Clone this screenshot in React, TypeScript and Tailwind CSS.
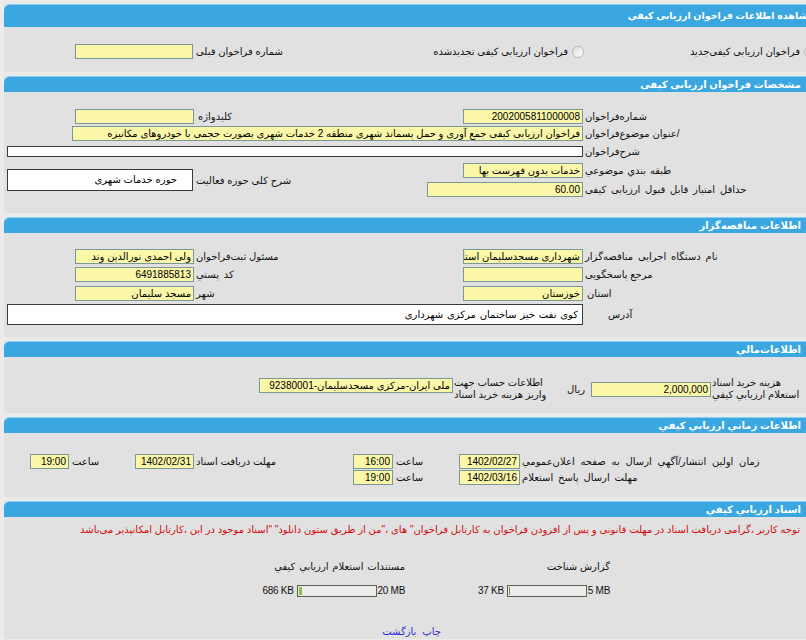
import clsx from "clsx";
import type { ReactNode } from "react";

function Field({ className, value, white }: { className: string; value?: string; white?: boolean }) {
  return (
    <div
      dir="rtl"
      className={clsx(
        "shrink-0 overflow-hidden whitespace-nowrap border px-[2px] text-right text-[10px] text-black",
        white ? "border-[#3a3a3a] bg-white" : "h-[15px] border-[#7b9898] bg-[#faf7a9] leading-[13px]",
        className,
      )}
    >
      {value}
    </div>
  );
}

function Label({ children, className }: { children: ReactNode; className?: string }) {
  return (
    <span dir="rtl" className={clsx("ml-[2px] whitespace-nowrap text-[10px] leading-[13px] text-[#111]", className)}>
      {children}
    </span>
  );
}

function TwoLines({ a, b, className }: { a: string; b: string; className?: string }) {
  return (
    <div dir="rtl" className={clsx("ml-[1px] flex flex-col items-end text-[10px] leading-[12px] text-[#111]", className)}>
      <span className="whitespace-nowrap">{a}</span>
      <span className="whitespace-nowrap">{b}</span>
    </div>
  );
}

function Radio({ className }: { className?: string }) {
  return <span className={clsx("h-[12px] w-[12px] shrink-0 rounded-full border border-[#b8b8b8] bg-gradient-to-br from-[#dcdcdc] to-white", className)} />;
}

function Bar({ title, big }: { title: string; big?: boolean }) {
  return (
    <div
      className={clsx(
        "flex items-center rounded-tl-[6px] border-t border-[#8ccff2] bg-[#3aa7e1]",
        big ? "h-[23px]" : "h-[16px]",
      )}
    >
      <div
        dir="rtl"
        className={clsx(
          "whitespace-nowrap font-bold text-white",
          big ? "w-[810px] text-[9.5px]" : "w-[797px] text-[10px]",
        )}
      >
        {title}
      </div>
    </div>
  );
}

function Panel({ title, big, children }: { title: string; big?: boolean; children: ReactNode }) {
  return (
    <section className="ml-[4px] w-[830px] bg-[#e1e1e1]">
      <Bar title={title} big={big} />
      {children}
    </section>
  );
}

function Meter({ used, max, fill }: { used: string; max: string; fill: string }) {
  return (
    <div className="mt-[12px] flex h-[12px] items-center text-[10px] leading-[12px] tracking-[-0.3px] text-[#111]">
      <span>{used}</span>
      <div className="ml-[3px] flex h-[12px] w-[80px] border border-[#5f5f50] bg-[#ececec] p-[1px]">
        <div className={clsx("h-full", fill)} />
      </div>
      <span className="ml-[1px]">{max}</span>
    </div>
  );
}

export default function App() {
  return (
    <div className="h-[640px] w-[806px] overflow-hidden bg-[#ebebeb] font-['Liberation_Sans','DejaVu_Sans',sans-serif]">
      <div className="flex w-[840px] flex-col gap-[4px] pt-[4px]">
        <Panel title="مشاهده اطلاعات فراخوان ارزیابی کیفی" big>
          <div className="box-content flex h-[15px] items-center pb-[13px] pt-[17px]">
            <div className="flex w-[296px] items-center pl-[71px]">
              <Field className="w-[118px]" />
              <Label className="ml-[3px]">شماره فراخوان قبلی</Label>
            </div>
            <div className="flex w-[284px] items-center justify-end">
              <Label>فراخوان ارزیابی کیفی تجدیدشده</Label>
              <Radio className="ml-[4px]" />
            </div>
            <div className="flex w-[216px] items-center justify-end">
              <Label>فراخوان ارزیابی کیفی‌جدید</Label>
            </div>
            <Radio className="ml-[4px]" />
          </div>
        </Panel>

        <Panel title="مشخصات فراخوان ارزیابی کیفی">
          <div className="pb-[16px] pt-[17px]">
            <div className="flex h-[15px] items-center">
              <div className="flex w-[416px] items-center pl-[71px]">
                <Field className="w-[119px]" />
                <Label className="ml-[4px]">کلیدواژه</Label>
              </div>
              <div className="flex items-center pl-[43px]">
                <Field className="w-[120px]" value="2002005811000008" />
                <Label>شماره‌فراخوان</Label>
              </div>
            </div>
            <div className="mt-[2px] flex h-[15px] items-center pl-[68px]">
              <Field
                className="w-[511px]"
                value="فراخوان ارزیابی کیفی جمع آوری و حمل پسماند شهری منطقه 2 خدمات شهری بصورت حجمی با خودروهای مکانیزه"
              />
              <Label>/عنوان موضوع‌فراخوان</Label>
            </div>
            <div className="mt-[4px] flex items-center pl-[3px]">
              <Field white className="h-[11px] w-[576px]" />
              <Label>شرح‌فراخوان</Label>
            </div>
            <div className="mt-[5px] flex items-center">
              <div className="flex w-[416px] items-center pl-[3px]">
                <Field white className="h-[22px] w-[186px] pr-[15px] leading-[20px]" value="حوزه خدمات شهری" />
                <Label className="ml-[3px]">شرح کلی حوزه فعالیت</Label>
              </div>
              <div className="flex flex-col gap-[4px]">
                <div className="flex items-center pl-[43px]">
                  <Field className="w-[120px]" value="خدمات بدون فهرست بها" />
                  <Label className="[word-spacing:1px]">طبقه بندي موضوعي</Label>
                </div>
                <div className="flex items-center pl-[7px]">
                  <Field className="w-[156px]" value="60.00" />
                  <Label className="[word-spacing:2px]">حداقل امتیاز قابل قبول ارزیابی کیفی</Label>
                </div>
              </div>
            </div>
          </div>
        </Panel>

        <Panel title="اطلاعات مناقصه‌گزار">
          <div className="pb-[12px] pt-[16px]">
            <div className="flex items-center">
              <div className="flex w-[416px] items-center pl-[71px]">
                <Field className="w-[119px]" value="ولی احمدی نورالدین وند" />
                <Label>مسئول ثبت‌فراخوان</Label>
              </div>
              <div className="flex items-center pl-[43px]">
                <Field className="w-[120px]" value="شهرداری مسجدسلیمان استان" />
                <Label className="[word-spacing:2px]">نام دستگاه اجرایی مناقصه‌گزار</Label>
              </div>
            </div>
            <div className="mt-[3px] flex items-center">
              <div className="flex w-[416px] items-center pl-[71px]">
                <Field className="w-[119px]" value="6491885813" />
                <Label className="[word-spacing:2px]">کد پستي</Label>
              </div>
              <div className="flex items-center pl-[43px]">
                <Field className="w-[120px]" />
                <Label>مرجع پاسخگویی</Label>
              </div>
            </div>
            <div className="mt-[4px] flex items-center">
              <div className="flex w-[416px] items-center pl-[71px]">
                <Field className="w-[119px]" value="مسجد سلیمان" />
                <Label>شهر</Label>
              </div>
              <div className="flex items-center pl-[43px]">
                <Field className="w-[120px]" value="خوزستان" />
                <Label className="ml-[4px]">استان</Label>
              </div>
            </div>
            <div className="mt-[3px] flex items-center pl-[3px]">
              <Field
                white
                className="h-[21px] w-[576px] pr-[4px] leading-[19px] [word-spacing:1px]"
                value="کوی نفت خیز ساختمان مرکزی شهرداری"
              />
              <Label className="ml-[25px]">آدرس</Label>
            </div>
          </div>
        </Panel>

        <Panel title="اطلاعات‌مالي">
          <div className="box-content flex h-[24px] items-center pb-[12px] pt-[20px]">
            <div className="flex w-[556px] items-center pl-[255px]">
              <Field className="-mt-[7px] w-[194px]" value="ملی ایران-مرکزی مسجدسلیمان-92380001" />
              <TwoLines a="اطلاعات حساب جهت" b="واریز هزینه خرید اسناد" />
            </div>
            <div dir="rtl" className="w-[30px] pr-[5px] text-[10px] text-[#111]">
              ریال
            </div>
            <Field className="ml-[1px] w-[120px]" value="2,000,000" />
            <TwoLines a="هزینه خرید اسناد" b="استعلام ارزیابي کیفي" />
          </div>
        </Panel>

        <Panel title="اطلاعات زماني ارزيابي كيفي">
          <div className="pb-[12px] pt-[21px]">
            <div className="flex items-center">
              <div className="flex w-[131px] items-center pl-[26px]">
                <Field className="w-[39px]" value="19:00" />
                <Label className="ml-[3px]">ساعت</Label>
              </div>
              <div className="flex w-[218px] items-center">
                <Field className="w-[59px]" value="1402/02/31" />
                <Label>مهلت دریافت اسناد</Label>
              </div>
              <div className="flex w-[106px] items-center">
                <Field className="w-[40px]" value="16:00" />
                <Label className="ml-[3px]">ساعت</Label>
              </div>
              <div className="flex items-center">
                <Field className="w-[61px]" value="1402/02/27" />
                <Label className="[word-spacing:3px]">زمان اولین انتشار/آگهي ارسال به صفحه اعلان‌عمومي</Label>
              </div>
            </div>
            <div className="mt-[1px] flex items-center pl-[349px]">
              <div className="flex w-[106px] items-center">
                <Field className="w-[40px]" value="19:00" />
                <Label className="ml-[3px]">ساعت</Label>
              </div>
              <div className="flex items-center">
                <Field className="w-[61px]" value="1402/03/16" />
                <Label className="[word-spacing:2px]">مهلت ارسال پاسخ استعلام</Label>
              </div>
            </div>
          </div>
        </Panel>

        <Panel title="اسناد ارزيابي كيفي">
          <div className="pt-[6px]">
            <p dir="rtl" className="w-[796px] whitespace-nowrap text-[10px] leading-[13px] text-[#d40b0b]">
              توجه کاربر ،گرامی دریافت اسناد در مهلت قانونی و پس از افزودن فراخوان به کارتابل فراخوان" های ،"من از طریق ستون دانلود" "اسناد موجود در این ،کارتابل امکانپذیر می‌باشد
            </p>
            <div className="mt-[24px] flex">
              <div className="flex w-[401px] flex-col items-end">
                <Label className="[word-spacing:1px]">مستندات استعلام ارزیابي کیفي</Label>
                <Meter used="686 KB" max="20 MB" fill="w-[3px] bg-[#8cc342]" />
              </div>
              <div className="flex w-[205px] flex-col items-end">
                <Label>گزارش شناخت</Label>
                <Meter used="37 KB" max="5 MB" fill="w-[1px] bg-[#6f8a52]" />
              </div>
            </div>
            <div className="mt-[28px] flex w-[437px] justify-end pb-[1px]">
              <div dir="rtl" className="flex gap-[6px] text-[10px] leading-[13px] text-[#2d2dcf]">
                <a href="#">چاپ</a>
                <a href="#">بازگشت</a>
              </div>
            </div>
          </div>
        </Panel>
      </div>
    </div>
  );
}
